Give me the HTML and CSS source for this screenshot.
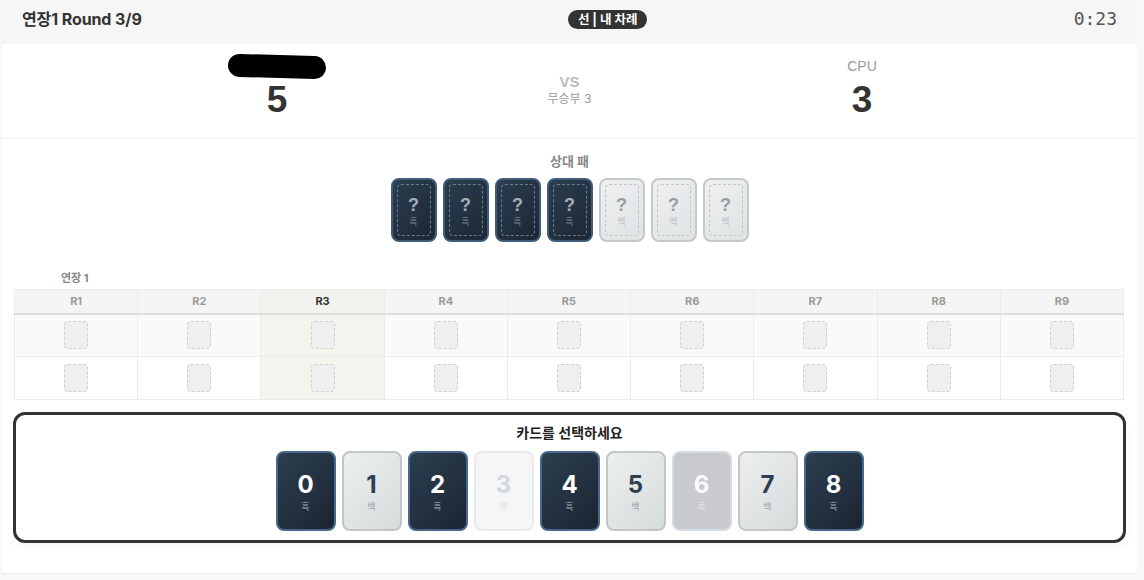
FILE: index.html
```html
<!DOCTYPE html>
<html lang="ko">
<head>
<meta charset="utf-8">
<title>연장1 Round 3/9</title>
<link rel="stylesheet" href="styles.css">
</head>
<body>
<div class="app">
  <header class="topbar">
    <div class="round-title">연장1 Round 3/9</div>
    <div class="turn-badge">선 | 내 차례</div>
    <div class="timer">0:23</div>
  </header>

  <section class="scoreboard">
    <div class="player">
      <div class="player-name"><span class="redact"></span></div>
      <div class="player-score">5</div>
    </div>
    <div class="versus">
      <div class="vs">VS</div>
      <div class="draws">무승부 3</div>
    </div>
    <div class="player">
      <div class="player-name">CPU</div>
      <div class="player-score">3</div>
    </div>
  </section>

  <section class="opponent">
    <div class="section-label">상대 패</div>
    <div class="opp-cards">
      <div class="opp-card dark"><div class="opp-inner"><span class="q">?</span><span class="c">흑</span></div></div>
      <div class="opp-card dark"><div class="opp-inner"><span class="q">?</span><span class="c">흑</span></div></div>
      <div class="opp-card dark"><div class="opp-inner"><span class="q">?</span><span class="c">흑</span></div></div>
      <div class="opp-card dark"><div class="opp-inner"><span class="q">?</span><span class="c">흑</span></div></div>
      <div class="opp-card light"><div class="opp-inner"><span class="q">?</span><span class="c">백</span></div></div>
      <div class="opp-card light"><div class="opp-inner"><span class="q">?</span><span class="c">백</span></div></div>
      <div class="opp-card light"><div class="opp-inner"><span class="q">?</span><span class="c">백</span></div></div>
    </div>
  </section>

  <section class="rounds">
    <div class="rounds-label">연장 1</div>
    <table class="round-table">
      <thead>
        <tr>
          <th>R1</th><th>R2</th><th class="cur">R3</th><th>R4</th><th>R5</th><th>R6</th><th>R7</th><th>R8</th><th>R9</th>
        </tr>
      </thead>
      <tbody>
        <tr class="row-opp">
          <td><span class="slot"></span></td><td><span class="slot"></span></td><td class="cur"><span class="slot"></span></td><td><span class="slot"></span></td><td><span class="slot"></span></td><td><span class="slot"></span></td><td><span class="slot"></span></td><td><span class="slot"></span></td><td><span class="slot"></span></td>
        </tr>
        <tr class="row-me">
          <td><span class="slot"></span></td><td><span class="slot"></span></td><td class="cur"><span class="slot"></span></td><td><span class="slot"></span></td><td><span class="slot"></span></td><td><span class="slot"></span></td><td><span class="slot"></span></td><td><span class="slot"></span></td><td><span class="slot"></span></td>
        </tr>
      </tbody>
    </table>
  </section>

  <section class="hand-panel">
    <div class="hand-title">카드를 선택하세요</div>
    <div class="hand">
      <div class="card dark"><span class="num">0</span><span class="col">흑</span></div>
      <div class="card light"><span class="num">1</span><span class="col">백</span></div>
      <div class="card dark"><span class="num">2</span><span class="col">흑</span></div>
      <div class="card light used"><span class="num">3</span><span class="col">백</span></div>
      <div class="card dark"><span class="num">4</span><span class="col">흑</span></div>
      <div class="card light"><span class="num">5</span><span class="col">백</span></div>
      <div class="card dark used"><span class="num">6</span><span class="col">흑</span></div>
      <div class="card light"><span class="num">7</span><span class="col">백</span></div>
      <div class="card dark"><span class="num">8</span><span class="col">흑</span></div>
    </div>
  </section>
</div>
</body>
</html>
```

FILE: styles.css
```css
* { box-sizing: border-box; }

html, body {
  margin: 0;
  padding: 0;
}

body {
  background: #f8f8f8;
  font-family: "Inter", "Noto Sans CJK KR", sans-serif;
  color: #333;
}

.app {
  width: 1135px;
  height: 574px;
  margin-left: 2px;
  background: #fff;
  border-bottom: 1px solid #ececec;
}

/* top bar */
.topbar {
  height: 44px;
  background: #f6f6f6;
  display: flex;
  align-items: flex-start;
  justify-content: space-between;
  padding: 9px 20px 0 20px;
}

.round-title {
  font-size: 16px;
  font-weight: 700;
  line-height: 20px;
  color: #333;
  letter-spacing: -0.1px;
}

.turn-badge {
  margin-top: 1px;
  height: 19px;
  line-height: 19px;
  padding: 0 10px;
  border-radius: 10px;
  background: #333;
  color: #fff;
  font-size: 12.5px;
  font-weight: 700;
}

.timer {
  font-family: "DejaVu Sans Mono", monospace;
  font-size: 18px;
  line-height: 20px;
  color: #555;
}

/* scoreboard */
.scoreboard {
  height: 95px;
  border-bottom: 1px solid #eee;
  display: grid;
  grid-template-columns: 292px 293px 292px;
  justify-content: center;
}

.player {
  display: flex;
  flex-direction: column;
  align-items: center;
  padding-top: 10px;
}

.player-name {
  height: 24px;
  line-height: 24px;
  font-family: "Liberation Sans", "Noto Sans CJK KR", sans-serif;
  font-size: 14px;
  color: #999;
  display: flex;
  align-items: center;
  justify-content: center;
}

.redact {
  display: block;
  width: 98px;
  height: 23px;
  background: #000;
  border-radius: 12px;
  transform: rotate(1.6deg);
}

.player-score {
  margin-top: 2px;
  height: 40px;
  line-height: 40px;
  font-family: "Liberation Sans", sans-serif;
  font-size: 37px;
  font-weight: 700;
  color: #333;
}

.versus {
  display: flex;
  flex-direction: column;
  align-items: center;
  padding-top: 30px;
}

.vs {
  font-family: "Liberation Sans", sans-serif;
  font-size: 15px;
  font-weight: 700;
  line-height: 16px;
  color: #bbb;
}

.draws {
  margin-top: 1px;
  font-size: 12px;
  line-height: 16px;
  color: #999;
}

/* opponent hand */
.opponent {
  padding-top: 14px;
  display: flex;
  flex-direction: column;
  align-items: center;
}

.section-label {
  font-size: 13px;
  font-weight: 600;
  line-height: 16px;
  color: #888;
}

.opp-cards {
  margin-top: 9px;
  display: flex;
  gap: 6px;
}

.opp-card {
  width: 46px;
  height: 64px;
  border-radius: 8px;
  border: 2px solid;
  padding: 4px;
}

.opp-card.dark {
  background: linear-gradient(135deg, #2c3e50, #1b2633);
  border-color: #3f5c7a;
}

.opp-card.light {
  background: linear-gradient(135deg, #eef0f1, #dfe3e4);
  border-color: #c6c9cb;
}

.opp-inner {
  height: 100%;
  border-radius: 4px;
  border: 1px dashed #6d7b89;
  display: flex;
  flex-direction: column;
  align-items: center;
  justify-content: center;
  padding-top: 3px;
}

.opp-card.light .opp-inner {
  border-color: #c2c6c9;
}

.opp-inner .q {
  font-family: "Liberation Sans", sans-serif;
  font-size: 18px;
  font-weight: 700;
  line-height: 18px;
  color: #a8aeb5;
}

.opp-inner .c {
  margin-top: 2px;
  font-size: 9px;
  line-height: 11px;
  color: #7c8895;
}

.opp-card.light .q { color: #9a9da0; }
.opp-card.light .c { color: #bbbfc2; }

/* rounds table */
.rounds {
  padding: 29px 13px 0 12px;
}

.rounds-label {
  padding-left: 47px;
  font-size: 11px;
  font-weight: 700;
  line-height: 14px;
  color: #888;
  margin-bottom: 4px;
}

.round-table {
  width: 100%;
  border-collapse: collapse;
  table-layout: fixed;
  border: 1px solid #ececec;
}

.round-table th {
  height: 24px;
  background: #f5f5f5;
  border: 1px solid #ececec;
  border-bottom: 2px solid #ddd;
  font-size: 11px;
  font-weight: 700;
  color: #9a9a9a;
  padding: 0;
}

.round-table th.cur {
  background: #f2f3ee;
  color: #333;
}

.round-table td {
  height: 43px;
  border: 1px solid #ececec;
  text-align: center;
  vertical-align: middle;
  padding: 0;
}

.row-opp td { background: #fafafa; }
.row-me td { background: #fff; }
.round-table td.cur { background: #f4f4ef; }

.slot {
  display: inline-block;
  width: 24px;
  height: 28px;
  border-radius: 4px;
  border: 1px dashed #d0d0d0;
  background: #efefef;
  vertical-align: middle;
}

/* hand panel */
.hand-panel {
  margin: 12px 11px 0 11px;
  border: 3px solid #333;
  border-radius: 12px;
  padding: 9px 0 9px;
  display: flex;
  flex-direction: column;
  align-items: center;
  box-shadow: 0 4px 10px rgba(0, 0, 0, 0.04);
}

.hand-title {
  font-size: 14px;
  font-weight: 700;
  line-height: 18px;
  color: #222;
}

.hand {
  margin-top: 9px;
  display: flex;
  gap: 6px;
}

.card {
  width: 60px;
  height: 80px;
  border-radius: 8px;
  border: 2px solid;
  display: flex;
  flex-direction: column;
  align-items: center;
  justify-content: center;
  padding-top: 2px;
}

.card .num {
  font-size: 24px;
  font-weight: 700;
  line-height: 26px;
}

.card .col {
  margin-top: 3px;
  font-size: 9px;
  line-height: 11px;
}

.card.dark {
  background: linear-gradient(135deg, #2c3e50, #1b2532);
  border-color: #47698b;
}
.card.dark .num { color: #fff; }
.card.dark .col { color: #a6aeb6; }

.card.light {
  background: linear-gradient(135deg, #eceff0, #d6dbdc);
  border-color: #c2c6c9;
}
.card.light .num { color: #2c3e50; }
.card.light .col { color: #9ba1a6; }

.card.light.used {
  background: #f5f6f7;
  border-color: #e8eaec;
}
.card.light.used .num { color: #d3d7db; }
.card.light.used .col { color: #e0e2e5; }

.card.dark.used {
  background: #c8cacd;
  border-color: #d5dce3;
}
.card.dark.used .num { color: #fafafa; }
.card.dark.used .col { color: #e6e7e9; }
```
